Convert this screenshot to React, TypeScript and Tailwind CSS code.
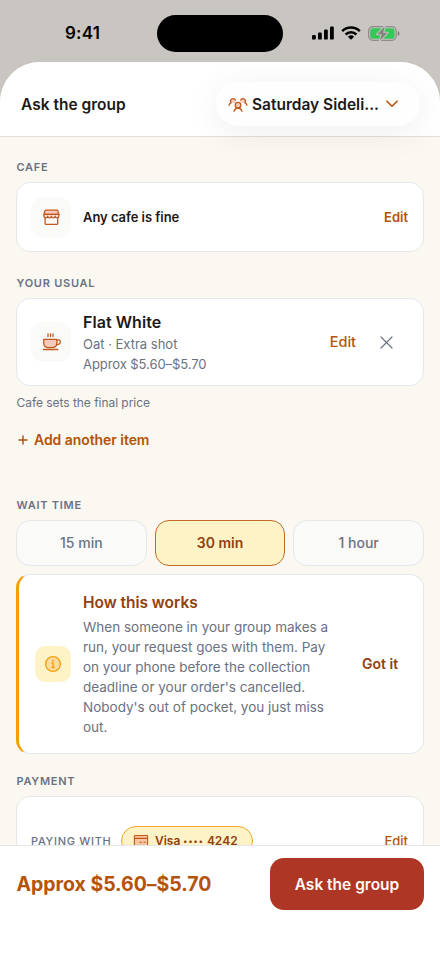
import type { ReactNode } from 'react'

const waitTimes = ['15 min', '30 min', '1 hour']

function StatusBar() {
  return (
    <div className="flex h-[62px] shrink-0 items-center pt-1">
      <div className="w-[157px] pl-[65px] text-[17px] leading-5 font-semibold tracking-[0.2px] text-black">9:41</div>
      <div className="h-[37px] w-[126px] rounded-full bg-black" />
      <div className="flex items-center pl-[29px]">
        <svg width="22" height="14" viewBox="0 0 22 14">
          <rect x="0" y="9" width="3.8" height="4.6" rx="1.2" />
          <rect x="6" y="6.6" width="3.8" height="7" rx="1.2" />
          <rect x="12" y="3.6" width="3.8" height="10" rx="1.2" />
          <rect x="18" y="0.4" width="3.8" height="13.2" rx="1.2" />
        </svg>
        <svg className="ml-[7px]" width="20" height="14" viewBox="0 0 20 14" fill="none" stroke="#000" strokeWidth="2.5">
          <path d="M1.2 5.1a12.6 12.6 0 0 1 17.6 0" />
          <path d="M4.6 8.5a7.8 7.8 0 0 1 10.8 0" />
          <path d="M10 13.8 6.9 10.8a4.5 4.5 0 0 1 6.2 0Z" fill="#000" stroke="none" />
        </svg>
        <svg className="ml-[7px]" width="32" height="15" viewBox="0 0 32 15">
          <rect x="0.6" y="0.6" width="27.6" height="13.8" rx="4.4" fill="none" stroke="#8e8c88" strokeWidth="1.2" />
          <path d="M29.8 5v5c1-.4 1.7-1.3 1.7-2.5s-.7-2.1-1.7-2.5Z" fill="#7c7a77" />
          <rect x="2.2" y="2.2" width="24.4" height="10.6" rx="2.9" fill="#34c759" />
          <path
            d="M16.7.6 9.2 8.3h4.4l-1.5 6.1 7.5-7.7h-4.4Z"
            fill="#85837f"
            stroke="#c9c5c0"
            strokeWidth="2"
            strokeLinejoin="round"
            paintOrder="stroke"
          />
        </svg>
      </div>
    </div>
  )
}

function GroupIcon() {
  return (
    <svg width="20" height="20" viewBox="0 0 20 20" fill="none" stroke="#c2591c" strokeWidth="1.3" strokeLinecap="round">
      <circle cx="5" cy="6.5" r="2.5" fill="#f6c9bd" stroke="none" />
      <circle cx="15" cy="6.5" r="2.5" fill="#f6c9bd" stroke="none" />
      <path d="M2.9 8.6A2.5 2.5 0 1 1 7.4 6" />
      <path d="M17.1 8.6A2.5 2.5 0 1 0 12.6 6" />
      <path d="M1 11.2C1.4 10 2 9.2 2.9 8.8M19 11.2C18.6 10 18 9.2 17.1 8.8" />
      <circle cx="10" cy="11.2" r="2.8" fill="#f6c9bd" />
      <path d="M6 17.3C6.8 15 8.2 14 10 14s3.2 1 4 3.3" />
    </svg>
  )
}

function StoreIcon() {
  return (
    <svg width="20" height="20" viewBox="0 0 20 20" fill="none" stroke="#c2591c" strokeWidth="1.3" strokeLinejoin="round">
      <path d="M4.2 3.2h12.4l1.3 4.2H2.9Z" fill="#f6c9bd" />
      <path d="M4.1 10.8v5.8q0 .7.7.7H16q.7 0 .7-.7v-5.8" />
      <path
        d="M2.9 7.4h15v1.8a1.88 1.88 0 0 1-3.75 0 1.88 1.88 0 0 1-3.75 0 1.88 1.88 0 0 1-3.75 0 1.88 1.88 0 0 1-3.75 0Z"
        fill="#fbe3da"
      />
    </svg>
  )
}

function CupIcon() {
  return (
    <svg width="20" height="20" viewBox="0 0 20 20" fill="none" stroke="#c2591c" strokeWidth="1.3" strokeLinecap="round">
      <path d="M2.7 7.4h13.2v3.2q0 5-4.2 5H7q-4.3 0-4.3-5Z" fill="#f6c9bd" strokeLinejoin="round" />
      <path d="M16 7.9h1.3q2 0 2 1.9 0 2.7-3.7 3" />
      <path d="M2.5 17.5h14.3M7 2v2.5M9.5 2v2.5M12 2v2.5" />
    </svg>
  )
}

function InfoIcon() {
  return (
    <svg width="20" height="20" viewBox="0 0 20 20" fill="none" stroke="#f59e0b" strokeWidth="1.3" strokeLinecap="round">
      <circle cx="10" cy="10" r="7.4" fill="#fbdc9c" />
      <circle cx="9.9" cy="6.6" r="0.95" fill="#f59e0b" stroke="none" />
      <path d="M9 9h1.1v4.3M9 13.5h2.3" />
    </svg>
  )
}

function CardIcon() {
  return (
    <svg width="16" height="14" viewBox="0 0 16 14" fill="none" stroke="#c2591c" strokeWidth="1.1">
      <rect x="1.4" y="1.5" width="13.2" height="11" rx="0.8" fill="#f8c49f" />
      <path d="M1.4 4.4h13.2M6.6 8.3h2.2M10.5 8.3h2.2" />
    </svg>
  )
}

function SectionLabel({ children }: { children: ReactNode }) {
  return <h2 className="pl-[0.5px] text-[11px] leading-4 font-semibold tracking-[0.75px] text-gray-500">{children}</h2>
}

function IconTile({ children }: { children: ReactNode }) {
  return <div className="flex size-10 shrink-0 items-center justify-center rounded-xl bg-[#fafaf9]">{children}</div>
}

function Header() {
  return (
    <header className="flex h-[75px] shrink-0 items-center justify-between border-b border-[#e2e0dd] bg-white pt-[9px] pr-5 pl-[21px]">
      <h1 className="pt-0.5 text-[15.5px] leading-6 font-semibold text-[#1c1917]">Ask the group</h1>
      <button className="relative z-10 flex h-11 w-[204px] items-center rounded-full bg-[#fefefe] pl-3 shadow-[0_6px_36px_rgba(0,0,0,0.07)]">
        <GroupIcon />
        <span className="ml-1 w-[127px] pt-0.5 text-left text-[15.5px] leading-6 font-semibold whitespace-nowrap text-[#1c1917]">
          Saturday Sideli...
        </span>
        <svg className="mt-px ml-[7px]" width="12" height="8" viewBox="0 0 12 8" fill="none" stroke="#b45309" strokeWidth="1.6">
          <path d="m.9 1.2 5.1 5.1 5.1-5.1" strokeLinecap="round" strokeLinejoin="round" />
        </svg>
      </button>
    </header>
  )
}

export default function App() {
  return (
    <div className="flex h-[956px] w-[440px] flex-col overflow-hidden bg-[#c9c5c0] font-['Inter',sans-serif]">
      <StatusBar />
      <div className="flex min-h-0 flex-1 flex-col overflow-hidden rounded-t-[40px] bg-[#fbf8f1]">
        <Header />

        <main className="flex min-h-0 flex-1 flex-col overflow-hidden px-4 pt-[22px]">
          <SectionLabel>CAFE</SectionLabel>
          <div className="mt-[7px] flex h-[70px] shrink-0 items-center rounded-[14px] border border-gray-200 bg-white pr-[15px] pl-3.5">
            <IconTile>
              <StoreIcon />
            </IconTile>
            <span className="ml-3 flex-1 pt-px text-[13px] font-semibold tracking-[-0.05px] text-[#1c1917]">
              Any cafe is fine
            </span>
            <button className="pt-px text-[13px] font-semibold text-[#b45309]">Edit</button>
          </div>

          <div className="mt-[23px]">
            <SectionLabel>YOUR USUAL</SectionLabel>
          </div>
          <div className="mt-[7px] flex h-[88px] shrink-0 items-center rounded-[14px] border border-gray-200 bg-white px-3.5">
            <IconTile>
              <CupIcon />
            </IconTile>
            <div className="ml-3 flex-1">
              <p className="text-base leading-6 font-semibold tracking-[0.05px] text-[#1c1917]">Flat White</p>
              <p className="text-[13px] leading-5 text-gray-500">Oat · Extra shot</p>
              <p className="text-[13px] leading-5 tracking-[-0.07px] text-gray-500">Approx $5.60–$5.70</p>
            </div>
            <button className="text-[14.5px] font-medium text-[#b45309]">Edit</button>
            <button className="mr-4 ml-6">
              <svg width="13" height="13" viewBox="0 0 13 13" fill="none" stroke="#6b7280" strokeWidth="1.2">
                <path d="m1 1 11 11M12 1 1 12" strokeLinecap="round" />
              </svg>
            </button>
          </div>
          <p className="mt-[9px] pl-[0.5px] text-xs leading-4 tracking-[-0.04px] text-gray-500">Cafe sets the final price</p>
          <button className="mt-[19px] flex h-5 items-center gap-[6px] pl-[2px] text-sm font-semibold tracking-[-0.06px] text-[#b45309]">
            <svg width="10" height="10" viewBox="0 0 10 10" fill="none" stroke="#b45309" strokeWidth="1.5">
              <path d="M5 .5v9M.5 5h9" />
            </svg>
            Add another item
          </button>

          <div className="mt-[47px]">
            <SectionLabel>WAIT TIME</SectionLabel>
          </div>
          <div className="mt-[7px] grid grid-cols-3 gap-2">
            {waitTimes.map((time) => (
              <button
                key={time}
                className={
                  time === '30 min'
                    ? 'h-[46px] rounded-[14px] border border-[#c2692a] bg-[#fef3c7] text-sm font-semibold text-[#92400e]'
                    : 'h-[46px] rounded-[14px] border border-gray-200 bg-[#fafaf9] text-sm font-medium text-gray-500'
                }
              >
                {time}
              </button>
            ))}
          </div>

          <div className="mt-2 flex h-[180px] shrink-0 items-center rounded-[14px] border border-l-[3px] border-gray-200 border-l-[#f59e0b] bg-white pl-4">
            <div className="flex size-9 shrink-0 items-center justify-center rounded-[10px] bg-[#fef3c7]">
              <InfoIcon />
            </div>
            <div className="ml-3 w-[255px] shrink-0 pb-px">
              <h3 className="mb-[2px] text-[15.5px] leading-6 font-semibold tracking-[-0.03px] text-[#92400e]">
                How this works
              </h3>
              <p className="w-[250px] text-[13.5px] leading-5 text-gray-500">
                When someone in your group makes a run, your request goes with them. Pay on your phone before the
                collection deadline or your order's cancelled. Nobody's out of pocket, you just miss out.
              </p>
            </div>
            <button className="ml-6 text-sm font-semibold whitespace-nowrap text-[#92400e]">Got it</button>
          </div>

          <div className="mt-[19px]">
            <SectionLabel>PAYMENT</SectionLabel>
          </div>
          <div className="mt-[7px] flex h-[90px] shrink-0 items-center rounded-[14px] border border-gray-200 bg-white pr-[15px] pl-3.5">
            <span className="w-[90px] text-[11px] font-medium tracking-[0.7px] whitespace-nowrap text-gray-500">
              PAYING WITH
            </span>
            <div className="flex h-[30px] w-[132px] items-center rounded-full border border-[#f5a623] bg-[#fef3c7] pl-[11px] text-[#92400e]">
              <CardIcon />
              <span className="ml-1.5 flex items-center gap-[3px] text-xs font-semibold whitespace-nowrap">
                <span>Visa</span>
                <span className="text-[8px] tracking-[1.1px]">••••</span>
                <span>4242</span>
              </span>
            </div>
            <button className="ml-auto pt-px text-[13px] font-medium text-[#b45309]">Edit</button>
          </div>
        </main>

        <footer className="flex h-[111px] shrink-0 items-start justify-between border-t border-gray-200 bg-white px-4 pt-3">
          <span className="pl-[0.5px] text-[19.5px] leading-[52px] font-bold tracking-[-0.03px] text-[#b45309]">
            Approx $5.60–$5.70
          </span>
          <button className="h-[52px] w-[154px] rounded-[14px] bg-[#ae3625] pt-0.5 text-[15.5px] leading-6 font-semibold text-[#fefaf5]">
            Ask the group
          </button>
        </footer>
      </div>
    </div>
  )
}
